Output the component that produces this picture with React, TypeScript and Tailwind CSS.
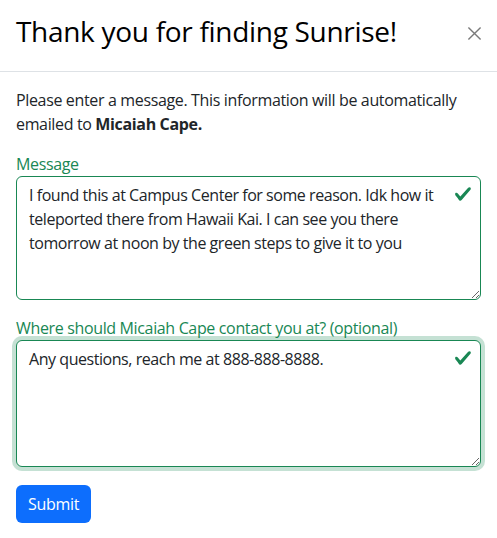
import React from "react";

const font = { fontFamily: '"Open Sans", "Noto Sans", sans-serif' };

// bootstrap style valid check
const ValidIcon = () => (
  <svg
    viewBox="0 0 8 8"
    className="absolute right-[9px] top-[9px] w-[18px] h-[18px] pointer-events-none"
  >
    <path
      fill="#198754"
      d="M2.3 6.73.6 4.53c-.4-1.04.46-1.4 1.1-.8l1.1 1.4 3.4-3.8c.6-.63 1.6-.27 1.2.7l-4 4.6c-.43.5-.8.4-1.1.1z"
    />
  </svg>
);

const CloseIcon = () => (
  <svg viewBox="0 0 16 16" className="w-[15px] h-[15px]">
    <path
      d="M1.5 1.5l13 13M14.5 1.5l-13 13"
      stroke="#7a7a7a"
      strokeWidth="1.5"
    />
  </svg>
);

interface FieldProps {
  id: string;
  label: string;
  value: string;
  height: string;
  focused?: boolean;
}

const ValidField = ({ id, label, value, height, focused }: FieldProps) => (
  <div className="mb-4">
    <label htmlFor={id} className="block text-[16px] leading-6 text-[#198754] tracking-[-0.35px]">
      {label}
    </label>
    <div className="relative">
      <textarea
        id={id}
        readOnly
        wrap="off"
        defaultValue={value}
        style={font}
        className={
          "block w-full rounded-md border border-[#198754] bg-white pl-3 pr-9 py-[6px] text-[16px] leading-6 text-[#212529] tracking-[-0.45px] outline-none overflow-hidden " +
          height +
          (focused ? " shadow-[0_0_0_4px_rgba(25,135,84,0.25)]" : "")
        }
      />
      <ValidIcon />
    </div>
  </div>
);

export default function App() {
  return (
    <div className="bg-white min-h-[538px] text-[#212529]" style={font}>
      <div className="flex items-start justify-between px-4 pt-[14px] border-b border-[#dee2e6] h-[72px]">
        <h1 className="-mt-[2px] text-[28px] leading-[38px] font-normal text-black tracking-[-0.3px]">
          Thank you for finding Sunrise!
        </h1>
        <button className="w-[38px] h-[38px] -mr-3 flex items-center justify-center">
          <CloseIcon />
        </button>
      </div>
      <div className="p-4">
        <div className="mb-4 text-[16px] leading-6 tracking-[-0.35px]">
          <div>Please enter a message. This information will be automatically</div>
          <div>
            emailed to <span className="font-bold">Micaiah Cape.</span>
          </div>
        </div>
        <ValidField
          id="message"
          label="Message"
          height="h-[124px]"
          value={
            "I found this at Campus Center for some reason. Idk how it\nteleported there from Hawaii Kai. I can see you there\ntomorrow at noon by the green steps to give it to you"
          }
        />
        <ValidField
          id="contact"
          label="Where should Micaiah Cape contact you at? (optional)"
          height="h-[127px]"
          value="Any questions, reach me at 888-888-8888."
          focused
        />
        <button className="mt-[2px] h-[38px] px-3 rounded-md bg-[#0d6efd] text-white text-[16px] leading-6 tracking-[-0.3px]">
          Submit
        </button>
      </div>
    </div>
  );
}
